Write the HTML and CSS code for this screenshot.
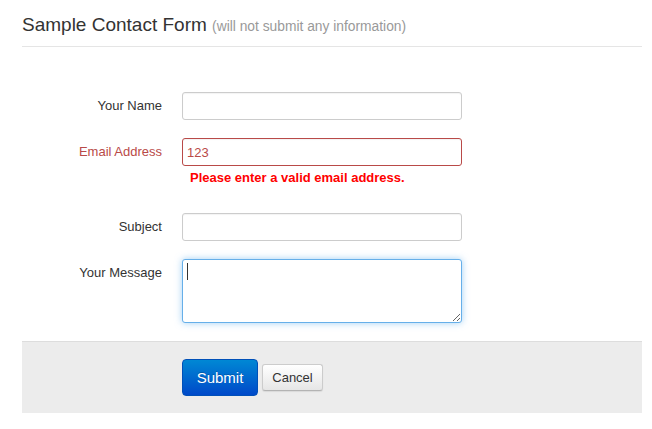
FILE: index.html
```html
<!DOCTYPE html>
<html>
<head>
<meta charset="utf-8">
<link rel="stylesheet" href="styles.css">
</head>
<body>
<div class="page">
  <h1 class="legend">Sample Contact Form <small>(will not submit any information)</small></h1>
  <form class="form">
    <div class="row">
      <label class="label">Your Name</label>
      <div class="controls"><input class="field" type="text"></div>
    </div>
    <div class="row error">
      <label class="label">Email Address</label>
      <div class="controls">
        <input class="field" type="text" value="123">
        <span class="help">Please enter a valid email address.</span>
      </div>
    </div>
    <div class="row">
      <label class="label">Subject</label>
      <div class="controls"><input class="field" type="text"></div>
    </div>
    <div class="row">
      <label class="label">Your Message</label>
      <div class="controls">
        <div class="area-wrap">
          <textarea class="area"></textarea>
          <span class="caret"></span>
        </div>
      </div>
    </div>
    <div class="actions">
      <button type="button" class="btn btn-primary">Submit</button>
      <button type="button" class="btn btn-default">Cancel</button>
    </div>
  </form>
</div>
</body>
</html>
```

FILE: styles.css
```css
html, body {
  margin: 0;
  padding: 0;
  background: #fff;
}
body {
  font-family: "Liberation Sans", Arial, sans-serif;
  font-size: 13px;
  color: #333;
}
.page {
  padding: 0 10px 0 22px;
}
.legend {
  margin: 0;
  padding: 12px 0 8px;
  font-size: 19px;
  line-height: 26px;
  height: 26px;
  font-weight: normal;
  color: #333;
  border-bottom: 1px solid #e5e5e5;
}
.legend small {
  font-size: 13.8px;
  line-height: 1;
  color: #999;
}
.form {
  padding-top: 45px;
}
.row {
  display: flex;
  margin-bottom: 18px;
}
.label {
  width: 140px;
  text-align: right;
  padding-top: 5px;
  line-height: 18px;
  margin-right: 20px;
  color: #333;
}
.controls {
  display: flex;
  flex-direction: column;
}
.field {
  box-sizing: border-box;
  width: 280px;
  height: 28px;
  margin: 0;
  padding: 4px 6px 4px 4px;
  font-family: "Liberation Sans", Arial, sans-serif;
  font-size: 13px;
  color: #555;
  border: 1px solid #ccc;
  border-radius: 3px;
  outline: none;
  box-shadow: inset 0 1px 1px rgba(0,0,0,0.05);
}
.error .label {
  color: #b94a48;
}
.error .field {
  border-color: #b94a48;
  color: #b94a48;
}
.help {
  display: block;
  margin-top: 2px;
  padding-left: 8px;
  line-height: 20px;
  color: #f00;
  font-weight: bold;
  margin-bottom: 7px;
}
.area-wrap {
  position: relative;
}
.area {
  display: block;
  box-sizing: border-box;
  width: 280px;
  height: 64px;
  margin: 0;
  padding: 4px;
  font-family: "Liberation Sans", Arial, sans-serif;
  font-size: 13px;
  border: 1px solid #66afe9;
  border-radius: 3px;
  outline: none;
  box-shadow: 0 0 7px rgba(82,168,236,0.55);
}
.caret {
  position: absolute;
  left: 5px;
  top: 4px;
  width: 1px;
  height: 17px;
  background: #333;
}
.actions {
  border-top: 1px solid #ddd;
  background: #ececec;
  padding: 17px 0 17px 160px;
  display: flex;
  align-items: center;
  gap: 4px;
}
.btn {
  box-sizing: border-box;
  margin: 0;
  font-family: "Liberation Sans", Arial, sans-serif;
  cursor: pointer;
}
.btn-primary {
  width: 76px;
  height: 37px;
  font-size: 15px;
  color: #fff;
  border: 1px solid #0050b8;
  border-radius: 4px;
  background: linear-gradient(to bottom, #0088d4, #0049c9);
  text-shadow: 0 -1px 0 rgba(0,0,0,0.2);
}
.btn-default {
  width: 61px;
  height: 27px;
  font-size: 13px;
  color: #333;
  border: 1px solid #ccc;
  border-bottom-color: #b3b3b3;
  border-radius: 3px;
  background: linear-gradient(to bottom, #ffffff, #e6e6e6);
  box-shadow: 0 1px 1px rgba(0,0,0,0.08);
}
```
